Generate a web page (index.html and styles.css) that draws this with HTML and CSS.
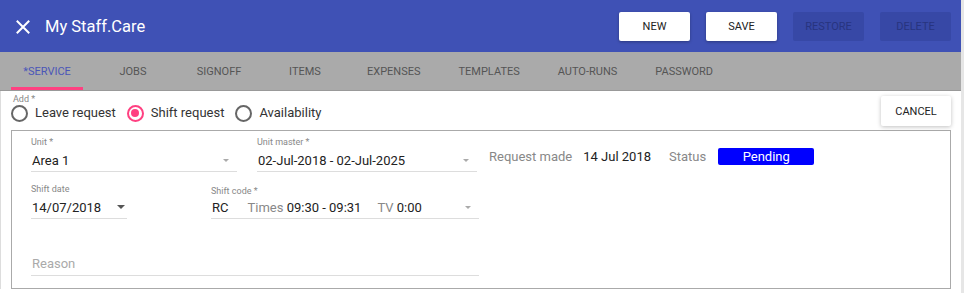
FILE: index.html
```html
<!DOCTYPE html>
<html lang="en">
<head>
    <meta charset="UTF-8">
    <title>My Staff.Care</title>
    <link rel="stylesheet" href="styles.css">
</head>
<body>
    <div class="app">
        <header class="topbar">
            <svg class="close" width="14" height="14" viewBox="0 0 14 14">
                <path d="M1.5 1.5 L12.5 12.5 M12.5 1.5 L1.5 12.5" stroke="#fff" stroke-width="2" stroke-linecap="square"/>
            </svg>
            <div class="app-title">My Staff.Care</div>
            <div class="actions">
                <button class="btn">NEW</button>
                <button class="btn">SAVE</button>
                <button class="btn btn-disabled">RESTORE</button>
                <button class="btn btn-disabled">DELETE</button>
            </div>
        </header>

        <nav class="tabs">
            <div class="tab active">*SERVICE</div>
            <div class="tab">JOBS</div>
            <div class="tab">SIGNOFF</div>
            <div class="tab">ITEMS</div>
            <div class="tab">EXPENSES</div>
            <div class="tab">TEMPLATES</div>
            <div class="tab">AUTO-RUNS</div>
            <div class="tab">PASSWORD</div>
        </nav>

        <main class="content">
            <div class="add-row">
                <div class="add-group">
                    <div class="small-label">Add *</div>
                    <div class="radios">
                        <label class="radio"><span class="dot"></span>Leave request</label>
                        <label class="radio checked"><span class="dot"></span>Shift request</label>
                        <label class="radio"><span class="dot"></span>Availability</label>
                    </div>
                </div>
                <button class="btn btn-cancel">CANCEL</button>
            </div>

            <div class="request-box">
                <div class="row">
                    <div class="field w-unit">
                        <div class="small-label">Unit *</div>
                        <div class="field-value"><span>Area 1</span><span class="arrow"></span></div>
                    </div>
                    <div class="field w-master">
                        <div class="small-label">Unit master *</div>
                        <div class="field-value"><span>02-Jul-2018 - 02-Jul-2025</span><span class="arrow"></span></div>
                    </div>
                    <div class="info">
                        <span class="muted">Request made</span>
                        <span class="date">14 Jul 2018</span>
                        <span class="muted">Status</span>
                        <span class="badge">Pending</span>
                    </div>
                </div>
                <div class="row">
                    <div class="field w-date">
                        <div class="small-label">Shift date</div>
                        <div class="field-value"><span>14/07/2018</span><span class="arrow dark"></span></div>
                    </div>
                    <div class="field w-code">
                        <div class="small-label">Shift code *</div>
                        <div class="field-value">
                            <span class="code">RC</span>
                            <span><span class="muted">Times</span> 09:30 - 09:31</span>
                            <span class="tv"><span class="muted">TV</span> 0:00</span>
                            <span class="arrow"></span>
                        </div>
                    </div>
                </div>
                <div class="field w-reason">
                    <div class="field-value placeholder">Reason</div>
                </div>
            </div>
        </main>
    </div>
</body>
</html>
```

FILE: styles.css
```css
body {
    margin: 0;
    font-family: Roboto, 'Liberation Sans', sans-serif;
    background-color: #ffffff;
    overflow: hidden;
}
.app {
    width: 961px;
    height: 293px;
    border-right: 3px solid #e6e6e6;
}
.topbar {
    height: 52px;
    background-color: #3f51b5;
    display: flex;
    align-items: center;
    padding-left: 16px;
    box-sizing: border-box;
}
.close {
    display: block;
    margin-right: 15px;
    margin-top: 1px;
}
.app-title {
    color: #ffffff;
    font-size: 16.5px;
}
.actions {
    margin-left: auto;
    display: flex;
    gap: 16px;
    padding-right: 10px;
}
.btn {
    width: 71px;
    height: 29px;
    border: none;
    border-radius: 2px;
    background-color: #ffffff;
    color: #222222;
    font-family: Roboto, 'Liberation Sans', sans-serif;
    font-size: 11px;
    padding: 0;
    box-shadow: 0 1px 3px rgba(0,0,0,0.3);
}
.btn-disabled {
    background-color: #3748a6;
    color: #27347f;
    box-shadow: none;
}

/* tabs */
.tabs {
    height: 38px;
    background-color: #aaaaaa;
    border-bottom: 1px solid #999999;
    display: flex;
    padding-left: 11px;
    gap: 14px;
}
.tab {
    min-width: 48px;
    padding: 0 12px;
    text-align: center;
    line-height: 39px;
    font-size: 11px;
    color: #555555;
    position: relative;
}
.tab.active {
    color: #4a56b8;
}
.tab.active::after {
    content: "";
    position: absolute;
    left: 0;
    right: 0;
    bottom: 0;
    height: 3px;
    background-color: #ff4081;
}

/* content */
.content {
    border-left: 1px solid #dddddd;
    padding: 0 10px 0 10px;
}
.add-row {
    display: flex;
    justify-content: space-between;
    align-items: flex-start;
    padding-top: 3px;
}
.small-label {
    font-size: 9px;
    color: #888888;
    line-height: 10px;
}
.add-group .small-label {
    padding-left: 2px;
}
.radios {
    display: flex;
    gap: 11px;
}
.radio {
    display: flex;
    align-items: center;
    font-size: 13px;
    color: #333333;
    line-height: 18px;
}
.dot {
    width: 13px;
    height: 13px;
    border: 2px solid #666666;
    border-radius: 50%;
    margin-right: 7px;
    position: relative;
}
.radio.checked .dot {
    border-color: #ff4081;
}
.radio.checked .dot::after {
    content: "";
    position: absolute;
    left: 2.5px;
    top: 2.5px;
    width: 8px;
    height: 8px;
    border-radius: 50%;
    background-color: #ff4081;
}
.btn-cancel {
    margin-top: 2px;
    width: 70px;
    height: 30px;
    box-shadow: 0 1px 4px rgba(0,0,0,0.25);
}

.request-box {
    margin-top: 4px;
    border: 1px solid #aaaaaa;
    width: 940px;
    box-sizing: border-box;
    height: 159px;
    padding: 6px 19px 0 19px;
}
.row {
    display: flex;
    align-items: flex-start;
    height: 47px;
}
.field {
    margin-right: 20px;
}
.field-value {
    display: flex;
    align-items: center;
    height: 22px;
    margin-top: 2px;
    font-size: 13px;
    color: #222222;
    border-bottom: 1px solid #dddddd;
    padding-left: 1px;
    white-space: nowrap;
}
.arrow {
    margin-left: auto;
    margin-right: 8px;
    width: 0;
    height: 0;
    border-left: 3px solid transparent;
    border-right: 3px solid transparent;
    border-top: 3px solid #aaaaaa;
}
.arrow.dark {
    border-left-width: 4px;
    border-right-width: 4px;
    border-top: 4px solid #555555;
    margin-right: 2px;
}
.w-unit { width: 206px; }
.w-master { width: 220px; margin-right: 12px; }
.w-date { width: 96px; margin-right: 84px; }
.w-code { width: 268px; }
.w-code .small-label { margin-top: 2px; }
.w-code .field-value { margin-top: 0; }
.w-reason { width: 448px; margin-top: 20px; }
.w-reason .field-value { height: 24px; }
.placeholder {
    color: #aaaaaa;
}
.muted {
    color: #888888;
}
.code {
    margin-right: 19px;
}
.tv {
    margin-left: 16px;
}
.info {
    display: flex;
    align-items: center;
    font-size: 13px;
    height: 22px;
    margin-top: 8px;
}
.date {
    color: #222222;
    margin-left: 11px;
    margin-right: 18px;
}
.badge {
    margin-left: 12px;
    width: 96px;
    height: 17px;
    line-height: 17px;
    text-align: center;
    background-color: #0000ff;
    color: #ffffff;
    border-radius: 2px;
}
```
